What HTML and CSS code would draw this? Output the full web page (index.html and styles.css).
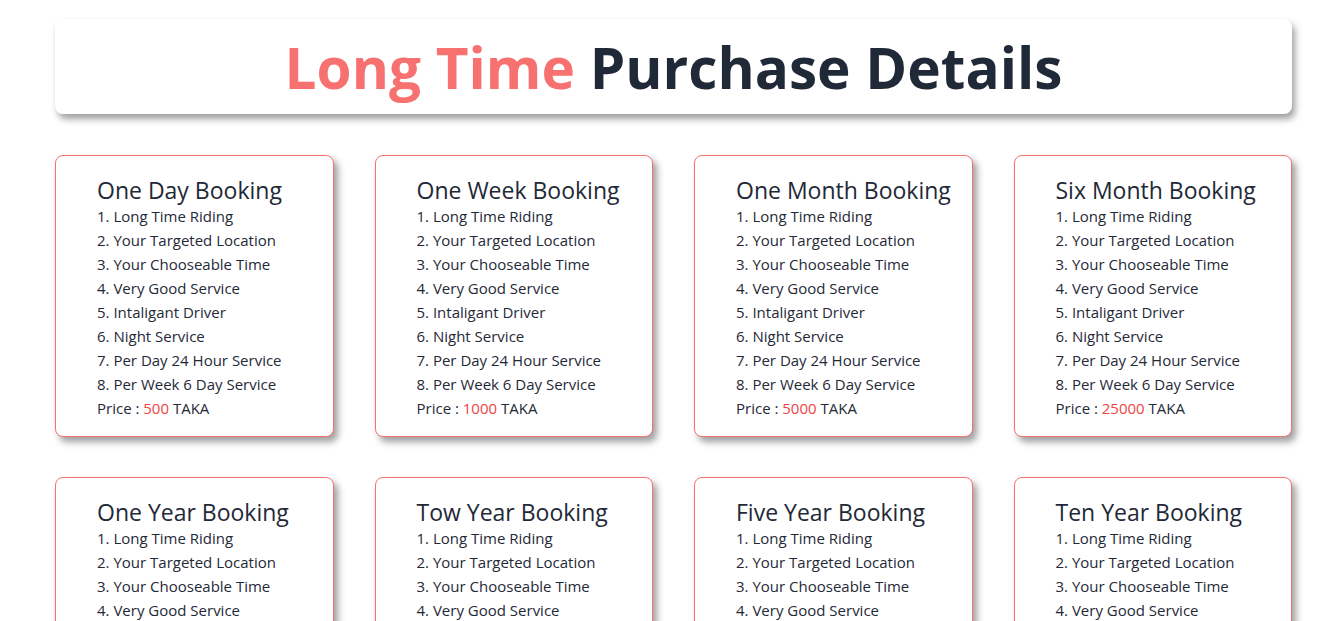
FILE: index.html
```html
<!DOCTYPE html>
<html lang="en">
<head>
<meta charset="utf-8">
<title>Long Time Purchase Details</title>
<link rel="stylesheet" href="styles.css">
</head>
<body>
<main class="page">
  <header class="banner">
    <h1 class="banner-title"><span class="accent">Long Time</span> Purchase Details</h1>
  </header>
  <section class="grid">
    <article class="card">
      <h2 class="card-title">One Day Booking</h2>
      <ul class="features">
        <li>1. Long Time Riding</li><li>2. Your Targeted Location</li><li>3. Your Chooseable Time</li><li>4. Very Good Service</li><li>5. Intaligant Driver</li><li>6. Night Service</li><li>7. Per Day 24 Hour Service</li><li>8. Per Week 6 Day Service</li>
      </ul>
      <p class="price">Price : <span class="amount">500</span> TAKA</p>
    </article>
    <article class="card">
      <h2 class="card-title">One Week Booking</h2>
      <ul class="features">
        <li>1. Long Time Riding</li><li>2. Your Targeted Location</li><li>3. Your Chooseable Time</li><li>4. Very Good Service</li><li>5. Intaligant Driver</li><li>6. Night Service</li><li>7. Per Day 24 Hour Service</li><li>8. Per Week 6 Day Service</li>
      </ul>
      <p class="price">Price : <span class="amount">1000</span> TAKA</p>
    </article>
    <article class="card">
      <h2 class="card-title">One Month Booking</h2>
      <ul class="features">
        <li>1. Long Time Riding</li><li>2. Your Targeted Location</li><li>3. Your Chooseable Time</li><li>4. Very Good Service</li><li>5. Intaligant Driver</li><li>6. Night Service</li><li>7. Per Day 24 Hour Service</li><li>8. Per Week 6 Day Service</li>
      </ul>
      <p class="price">Price : <span class="amount">5000</span> TAKA</p>
    </article>
    <article class="card">
      <h2 class="card-title">Six Month Booking</h2>
      <ul class="features">
        <li>1. Long Time Riding</li><li>2. Your Targeted Location</li><li>3. Your Chooseable Time</li><li>4. Very Good Service</li><li>5. Intaligant Driver</li><li>6. Night Service</li><li>7. Per Day 24 Hour Service</li><li>8. Per Week 6 Day Service</li>
      </ul>
      <p class="price">Price : <span class="amount">25000</span> TAKA</p>
    </article>
    <article class="card">
      <h2 class="card-title">One Year Booking</h2>
      <ul class="features">
        <li>1. Long Time Riding</li><li>2. Your Targeted Location</li><li>3. Your Chooseable Time</li><li>4. Very Good Service</li><li>5. Intaligant Driver</li><li>6. Night Service</li><li>7. Per Day 24 Hour Service</li><li>8. Per Week 6 Day Service</li>
      </ul>
      <p class="price">Price : <span class="amount">50000</span> TAKA</p>
    </article>
    <article class="card">
      <h2 class="card-title">Tow Year Booking</h2>
      <ul class="features">
        <li>1. Long Time Riding</li><li>2. Your Targeted Location</li><li>3. Your Chooseable Time</li><li>4. Very Good Service</li><li>5. Intaligant Driver</li><li>6. Night Service</li><li>7. Per Day 24 Hour Service</li><li>8. Per Week 6 Day Service</li>
      </ul>
      <p class="price">Price : <span class="amount">100000</span> TAKA</p>
    </article>
    <article class="card">
      <h2 class="card-title">Five Year Booking</h2>
      <ul class="features">
        <li>1. Long Time Riding</li><li>2. Your Targeted Location</li><li>3. Your Chooseable Time</li><li>4. Very Good Service</li><li>5. Intaligant Driver</li><li>6. Night Service</li><li>7. Per Day 24 Hour Service</li><li>8. Per Week 6 Day Service</li>
      </ul>
      <p class="price">Price : <span class="amount">250000</span> TAKA</p>
    </article>
    <article class="card">
      <h2 class="card-title">Ten Year Booking</h2>
      <ul class="features">
        <li>1. Long Time Riding</li><li>2. Your Targeted Location</li><li>3. Your Chooseable Time</li><li>4. Very Good Service</li><li>5. Intaligant Driver</li><li>6. Night Service</li><li>7. Per Day 24 Hour Service</li><li>8. Per Week 6 Day Service</li>
      </ul>
      <p class="price">Price : <span class="amount">500000</span> TAKA</p>
    </article>
  </section>
</main>
</body>
</html>
```
FILE: styles.css
```css
* { box-sizing: border-box; }
html, body { margin: 0; padding: 0; background: #ffffff; }
body {
  font-family: "Open Sans", "Noto Sans", "Liberation Sans", sans-serif;
  color: #1f2937;
}
.page {
  width: 1237px;
  margin: 0 0 0 55px;
  padding-top: 19px;
}
.banner {
  height: 95px;
  background: #fff;
  border-radius: 8px;
  box-shadow: 3px 5px 7px rgba(0, 0, 0, 0.38);
  display: flex;
  align-items: center;
  justify-content: center;
}
.banner-title {
  margin: 0;
  font-size: 56.7px;
  font-weight: 700;
  color: #1f2937;
  line-height: 1;
  padding-top: 2px;
}
.accent { color: #f87171; }
.grid {
  margin-top: 41px;
  display: grid;
  grid-template-columns: repeat(4, 1fr);
  column-gap: 41px;
  row-gap: 40px;
}
.card {
  height: 282px;
  border: 1px solid #f87171;
  border-radius: 8px;
  background: #fff;
  box-shadow: 4px 5px 7px rgba(0, 0, 0, 0.38);
  padding: 20px 8px 16px 41px;
}
.card-title {
  margin: 0;
  font-size: 23px;
  font-weight: 400;
  line-height: 28px;
  color: #1f2937;
}
.features {
  list-style: none;
  margin: 0;
  padding: 0;
}
.features li, .price {
  font-size: 15px;
  line-height: 24px;
  color: #1f2937;
}
.price { margin: 0; }
.amount { color: #ef4444; }
```
